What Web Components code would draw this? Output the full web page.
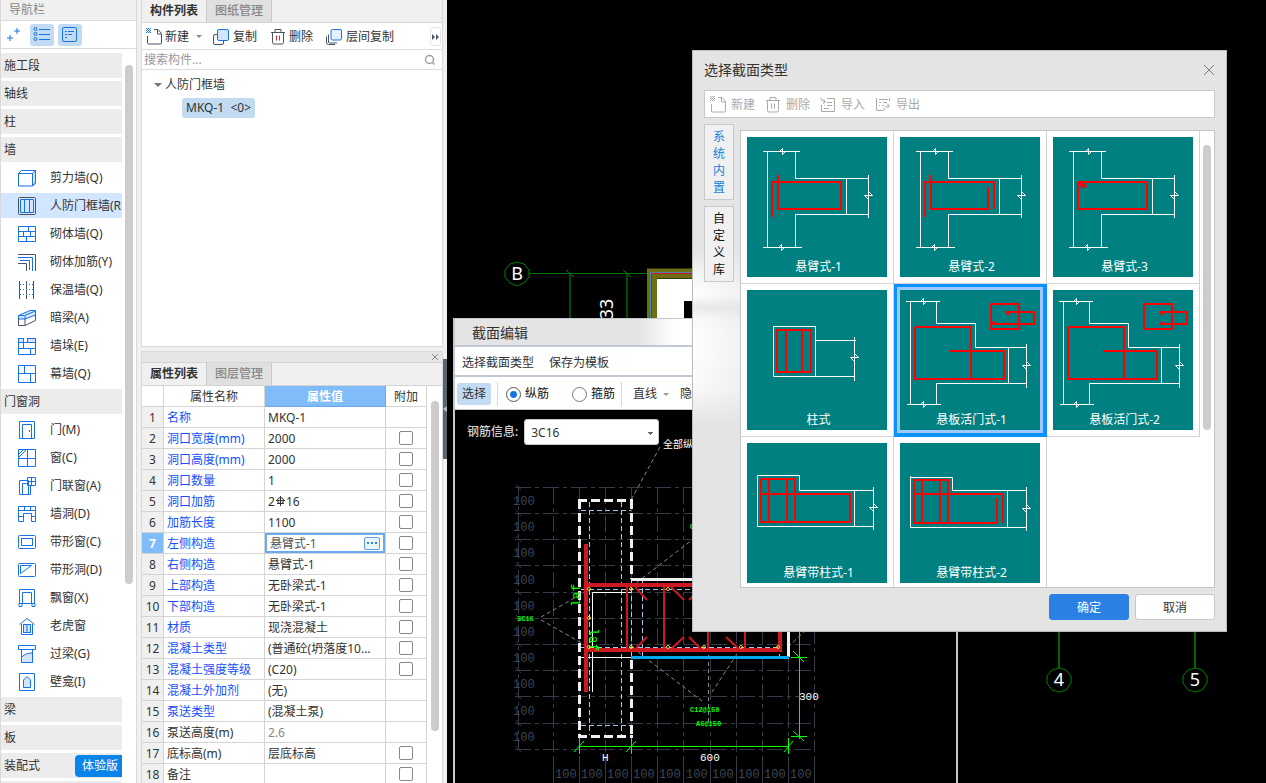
<!DOCTYPE html>
<html lang="zh-CN">
<head>
<meta charset="utf-8">
<title>截面编辑</title>
<style>
  html, body {
    margin: 0;
    height: 100%;
  }

  body {
    font-family: "Noto Sans", "Noto Sans CJK SC", sans-serif;
    font-size: 12px;
    line-height: 18px;
    color: #333;
    background: #f0f0f0;
    overflow: hidden;
  }
</style>
</head>
<body>
<cad-app></cad-app>

<script>
(function() {
  const base = `
    *, *::before { box-sizing: border-box; }
    button, select, input { font: inherit; color: inherit; margin: 0; }
    button { border: none; background: none; padding: 0; line-height: 18px; white-space: nowrap; }
    svg { display: block; flex: none; }
  `;

  // html is a string, or a function of the host element
  const define = (name, html) => {
    customElements.define(name, class extends HTMLElement {
      constructor() {
        super();
        const template = document.createElement('template');
        template.innerHTML = typeof html === 'function' ? html(this) : html;
        this.attachShadow({ mode: 'open' });
        this.shadowRoot.appendChild(template.content.cloneNode(true));
      }
    });
  };

  // ---- icons -------------------------------------------------------------

  const blue = '#1673e6';
  const dark = '#4a5266';
  const pale = '#d3e4fb';

  const icons = {
    plus: `<path d="M12 2v6M9 5h6M5 9v6M2 12h6" stroke="${blue}"/>`,
    list: `<g stroke="${blue}"><circle cx="2.5" cy="3" r="1.5"/><circle cx="2.5" cy="8" r="1.5"/><circle cx="2.5" cy="13" r="1.5"/><path d="M6 3.5h11M6 8.5h11M6 13.5h11"/></g>`,
    card: `<g stroke="${blue}"><rect x="1.5" y="1.5" width="14" height="14" rx="1.5"/><path d="M4 5.5h2M7 5.5h6M4 8.5h2M7 8.5h4M4 11.5h2"/></g>`,
    create: `<path d="M1.500 8v7a1 1 0 0 0 1 1h12a1 1 0 0 0 1-1V5.500L12 1.500H8M11.500 1.500V6h4" stroke="var(--ink, ${dark})"/><path d="M0 .5h5M1 1.500h4M0 2.500h5M1 3.500h4M0 4.500h5" stroke="var(--mark, ${blue})" stroke-dasharray="1 1"/>`,
    copy: `<rect x=".5" y="6.500" width="10" height="10" rx="1.500" stroke="${dark}"/><rect x="4.500" y="1.500" width="11" height="11" rx="1.500" fill="${pale}" stroke="${blue}"/>`,
    copies: `<path d="M2.500 6.500V14a1 1 0 0 0 1 1H11M.5 8.500V15a2 2 0 0 0 2 1.500H9" stroke="${dark}"/><rect x="5" y="1.500" width="10.500" height="10.500" rx="1.500" fill="#e6f0ff" stroke="${blue}"/>`,
    trash: `<path d="M1 4.500h14M5 4V1.500h6V4M2.500 5v9.500a1.500 1.500 0 0 0 1.500 1.500h8a1.500 1.500 0 0 0 1.500-1.500V5" stroke="var(--ink, ${dark})"/><path d="M6.500 7.500v5M9.500 7.500v5" stroke="var(--mark, #d9222a)"/>`,
    import: `<path d="M7 2.500h7.500v13h-13V9M1 1.500c0 3 1 4 4 4M3 3l2.500 2.500L3 8M7 6.500h5M4 9.500h1M7 9.500h5M4 12.500h5" stroke="var(--ink)"/>`,
    export: `<path d="M1.500 2v12.500H8M4 3.500h9M4 6.500h2M8 6.500h4M4 9.500h1M7 9.500h2M14.500 2v3M9 15c0-4 1-5 5-5M12 7.500l2.500 2.500L12 12.500" stroke="var(--ink)"/>`,
    search: `<circle cx="5.500" cy="5.500" r="4" stroke="#a0a0a0" stroke-width="1.500"/><path d="M8.500 8.500L10.500 10.500" stroke="#a0a0a0" stroke-width="1.500"/>`,
    close: `<path d="M1 1l10 10M11 1l-10 10" stroke="#808080"/>`
  };

  const navIcons = {
    shear: `<path d="M14.500 4.500L17.500 1.500V14l-3 3z" fill="${pale}"/><path d="M.5 4.500h14v12.500H.5zM.5 4.500L3.500 1.500h14V14l-3 3M14.500 4.500l3-3"/>`,
    frame: `<rect x=".5" y=".5" width="17" height="17" rx="1" stroke="${dark}"/><path d="M2.500 2.500h13v13h-13zM6.500 2.500v13M11.500 2.500v13"/>`,
    brick: `<path d="M.5 1.500h17v15H.5zM.5 6.500h17M.5 11.500h17M10.500 1.500v5M5.500 6.500v5M12.500 6.500v5M8.500 11.500v5"/>`,
    rebar: `<path d="M0 1.500h17.500V18" stroke="${dark}"/><path d="M0 4.500h14.500V18M2 7.500h9.500V17"/><path d="M0 10.500h8.500V18" stroke="${dark}"/>`,
    insul: `<path d="M1.500 0v18M8.500 0v18M15.500 0v18" stroke="${dark}"/><path d="M2 3.500h14M2 8.500h14M2 13.500h14" stroke-dasharray="1 2"/>`,
    hidden: `<path d="M.5 6.500L12 1.500h5.500V6L7 10H.5z" fill="${pale}"/><path d="M7 7v3M.5 6.500h6L17.500 2"/><path d="M.5 10v6.500H7V10M7 16.500l10.500-5V6" stroke="${dark}"/>`,
    pier: `<rect x=".5" y="1.500" width="5" height="4" fill="${pale}"/><rect x="9.500" y="1.500" width="8" height="4" fill="${pale}"/><path d="M.5 5.500v12h17v-12M.5 5.500h17M5.500 5.500v6M.5 11.500h17M12.500 11.500v6"/>`,
    curtain: `<path d="M.5.5h17v17H.5zM6.500.5v8M.5 8.500h17M12.500 8.500v9"/>`,
    door: `<path d="M1.500.5h15v17h-15zM4.500 17.500V3.500h9v14M11.500 9v2"/>`,
    window: `<path d="M.5.5h17v17H.5zM9.500.5v17M.5 9.500h17M1 8l7-7M1 5l4-4"/>`,
    doorwin: `<path d="M1.500 3.500h9v14h-9zM4.500 17.500V6.500h4M9.500.5h8v8h-8zM13.500.5v8M9.500 4.500h8M12.500 9v8.500h-3"/>`,
    hole: `<path d="M.5 1.500h17v15h-4V8.500h-8v8h-5zM.5 5.500h17M6.500 1.500v4M12.500 1.500v4M.5 11.500h5M13.500 11.500h4"/>`,
    strip: `<rect x=".5" y="2.500" width="17" height="13" rx="1"/><rect x="3.500" y="5.500" width="11" height="7"/>`,
    striphole: `<rect x=".5" y="2.500" width="17" height="13" rx="1"/><path d="M2.500 4.500h11L2.500 12.500z"/>`,
    bay: `<path d="M1.500 14V.5h15V14M4.500 14V3.500h9V14M1 14.500h3v3H1zM14 14.500h3v3h-3zM4 14.500h10"/>`,
    dormer: `<rect x="5.500" y="7.500" width="7" height="8" fill="${pale}"/><path d="M1.500 7.500L9 1.500l7.500 6M3.500 7v10.500h11V7M9 8v8"/>`,
    lintel: `<path d="M3.500 12c4-3 6-4 11-4v9.500h-11z" fill="${pale}"/><path d="M.5.5h17v4H.5zM3.500 5v12.500h11V5"/>`,
    niche: `<path d="M1.500.5h15v17h-15z"/><path d="M5.500 14.500V7L9 3.500 12.500 7v7.500z" fill="${pale}"/>`
  };

  const icon = (name, w = 18, h = 18) =>
    `<svg width="${w}" height="${h}" fill="none" aria-hidden="true">${icons[name]}</svg>`;
  const navIcon = name =>
    `<svg width="18" height="18" fill="none" stroke="${blue}" aria-hidden="true">${navIcons[name]}</svg>`;

  // ---- navigation --------------------------------------------------------

  const nav = [
    ['施工段'], ['轴线'], ['柱'], ['墙'],
    ['剪力墙(Q)', 'shear'], ['人防门框墙(R', 'frame'], ['砌体墙(Q)', 'brick'],
    ['砌体加筋(Y)', 'rebar'], ['保温墙(Q)', 'insul'], ['暗梁(A)', 'hidden'],
    ['墙垛(E)', 'pier'], ['幕墙(Q)', 'curtain'],
    ['门窗洞'],
    ['门(M)', 'door'], ['窗(C)', 'window'], ['门联窗(A)', 'doorwin'], ['墙洞(D)', 'hole'],
    ['带形窗(C)', 'strip'], ['带形洞(D)', 'striphole'], ['飘窗(X)', 'bay'],
    ['老虎窗', 'dormer'], ['过梁(G)', 'lintel'], ['壁龛(I)', 'niche'],
    ['梁'], ['板'], ['装配式']
  ];

  define('side-nav', `
    <style>
    ${base}
    :host {
        display: flex;
        flex-direction: column;
        width: 137px;
        height: 100%;
        background: white;
        border: solid #d9d9d9;
        border-width: 0 1px;
        overflow: hidden;
    }

    header {
        background: #f0f0f0;
        color: #888;
        padding: 1px 8px;
        border-bottom: 1px solid #dcdcdc;
    }

    .tools {
        display: flex;
        gap: 4px;
        padding: 3px 1px 2px;
        border-bottom: 1px solid #d9d9d9;
    }

    .tools button {
        width: 24px;
        height: 22px;
        display: grid;
        place-items: center;
        border-radius: 3px;
    }

    .tools .on { background: #c2dbf2; }

    .body {
        flex: 1;
        min-height: 0;
        display: flex;
        justify-content: space-between;
    }

    .list {
        width: 121px;
        padding-top: 4px;
        display: flex;
        flex-direction: column;
        gap: 3px;
    }

    .list button {
        height: 25px;
        flex: none;
        display: flex;
        align-items: center;
        gap: 14px;
        padding-left: 17px;
        overflow: hidden;
    }

    .list .group {
        background: #ececec;
        padding-left: 3px;
        justify-content: space-between;
    }

    .list .active { background: #d3e6ff; }

    .trial {
        background: #0a84e8;
        color: white;
        padding: 2px 4px 2px 7px;
        border-radius: 4px 0 0 4px;
    }

    .bar {
        width: 8px;
        height: 519px;
        margin: 16px 3px 0;
        border-radius: 4px;
        background: #ccc;
    }
    </style>
    <header>导航栏</header>
    <div class="tools">
      <button title="添加">${icon('plus')}</button>
      <button class="on" title="列表">${icon('list')}</button>
      <button class="on" title="卡片">${icon('card')}</button>
    </div>
    <div class="body">
      <div class="list">
        ${nav.map(([text, ic], i) => ic
          ? `<button${i === 5 ? ' class="active"' : ''}>${navIcon(ic)}<span>${text}</span></button>`
          : `<button class="group"><span>${text}</span>${text === '装配式' ? '<span class="trial">体验版</span>' : ''}</button>`
        ).join('')}
        <button class="group"></button>
      </div>
      <div class="bar"></div>
    </div>
  `);

  // ---- tab strip ---------------------------------------------------------

  define('tab-strip', host => `
    <style>
    ${base}
    :host {
        display: flex;
        background: #f0f0f0;
        border-bottom: 1px solid #d4d4d4;
    }

    button {
        height: 22px;
        padding: 0 8px;
        border-right: 1px solid #c8c8c8;
        color: #888;
        font-weight: 500;
        background: #e0e0e0;
    }

    button:first-of-type {
        color: #333;
        font-weight: bold;
        background: #f0f0f0;
    }
    </style>
    ${(host.getAttribute('tabs') || '').split(',').map(t => `<button role="tab">${t}</button>`).join('')}
  `);

  // ---- component list ----------------------------------------------------

  define('component-list', `
    <style>
    ${base}
    :host {
        display: flex;
        flex-direction: column;
        background: white;
        border: 1px solid #d9d9d9;
        border-top: none;
    }

    .tools {
        display: flex;
        align-items: center;
        height: 27px;
        padding: 1px 1px 0 4px;
        border-bottom: 1px solid #dcdcdc;
    }

    .tools button {
        display: flex;
        align-items: center;
        gap: 2px;
        margin-right: 13px;
    }

    .tools .drop { margin-right: 11px; }
    .tools .drop::after {
        content: "";
        border: 3px solid transparent;
        border-top-color: #888;
        border-bottom: none;
        margin-left: 5px;
    }

    .tools .more {
        margin: 0 0 0 auto;
        width: 11px;
        height: 19px;
        border: 1px solid #e4e4e4;
        border-radius: 3px;
    }

    .find {
        display: flex;
        align-items: center;
        height: 20px;
        padding-right: 6px;
        border-bottom: 1px solid #dcdcdc;
    }

    input {
        flex: 1;
        min-width: 0;
        border: none;
        outline: none;
        padding: 0 2px;
        height: 18px;
        background: none;
    }

    input::placeholder { color: #999; }

    .tree { padding: 6px 12px; }

    .node {
        display: flex;
        align-items: center;
        gap: 3px;
    }

    .node::before {
        content: "";
        border: 4px solid transparent;
        border-top-color: #777;
        border-bottom: none;
    }

    .leaf {
        margin: 4px 0 0 28px;
        padding: 1px 4px;
        border-radius: 3px;
        background: #c2dbf2;
        white-space: pre;
    }
    </style>
    <tab-strip tabs="构件列表,图纸管理"></tab-strip>
    <div class="tools">
      <button class="drop">${icon('create', 17)}新建</button>
      <button>${icon('copy', 18)}复制</button>
      <button>${icon('trash', 17)}删除</button>
      <button>${icon('copies', 18)}层间复制</button>
      <button class="more" title="更多"><svg width="9" height="8"><path d="M1 1l3 3-3 3zM5 1l3 3-3 3z" fill="${dark}"/></svg></button>
    </div>
    <div class="find">
      <input type="text" placeholder="搜索构件..." aria-label="搜索构件">
      ${icon('search', 12, 12)}
    </div>
    <div class="tree">
      <div class="node">人防门框墙</div>
      <button class="leaf">MKQ-1  &lt;0&gt;</button>
    </div>
  `);

  // ---- property table ----------------------------------------------------

  const rebarSign = '<svg width="10" height="10" fill="none" stroke="#333"><circle cx="5.5" cy="4.500" r="3"/><path d="M5.500 0v10M1 4.500h9M2 7.500h7"/></svg>';

  // name, value, has checkbox, plain (not blue) name
  const props = [
    ['名称', 'MKQ-1', 0], ['洞口宽度(mm)', '2000', 1], ['洞口高度(mm)', '2000', 1],
    ['洞口数量', '1', 1], ['洞口加筋', `2${rebarSign}16`, 1],
    ['加筋长度', '1100', 1], ['左侧构造', '悬臂式-1', 1], ['右侧构造', '悬臂式-1', 1],
    ['上部构造', '无卧梁式-1', 1], ['下部构造', '无卧梁式-1', 1], ['材质', '现浇混凝土', 1],
    ['混凝土类型', '(普通砼(坍落度10...', 1], ['混凝土强度等级', '(C20)', 1],
    ['混凝土外加剂', '(无)', 0], ['泵送类型', '(混凝土泵)', 0],
    ['泵送高度(m)', '<span class="dim">2.6</span>', 0, 1], ['底标高(m)', '层底标高', 1, 1], ['备注', '', 1, 1]
  ];

  define('property-list', `
    <style>
    ${base}
    :host {
        display: flex;
        flex-direction: column;
        background: white;
        border: 1px solid #d9d9d9;
        border-bottom: none;
        overflow: hidden;
    }

    .head {
        display: flex;
        justify-content: flex-end;
        align-items: center;
        height: 11px;
        padding-right: 3px;
        background: #e6e6e6;
        border-bottom: 1px solid #d4d4d4;
    }

    .body {
        flex: 1;
        min-height: 0;
        display: flex;
        justify-content: space-between;
        overflow: hidden;
    }

    table {
        width: 285px;
        height: max-content;
        table-layout: fixed;
        border-collapse: separate;
        border-spacing: 0;
    }

    th, td {
        height: 21px;
        padding: 2px 0 0 3px;
        border: solid #d4d4d4;
        border-width: 0 1px 1px 0;
        font-weight: normal;
        text-align: left;
        white-space: nowrap;
        line-height: 18px;
    }

    thead th { text-align: center; padding: 2px 0 0; }
    thead .on { background: #80bbfa; color: white; font-weight: bold; border-color: #6aa8ea; }
    tbody th { background: #f0f0f0; text-align: center; padding: 2px 0 0; }
    td { color: #1450ff; }
    td + td { color: #333; }
    .plain td { color: #333; }
    td.tick { padding: 0; text-align: center; }
    .dim { color: #888; }
    td svg { display: inline-block; margin: 0 1px 0 0; vertical-align: 0; }

    .active th { background: #80bbfa; color: white; font-weight: bold; }
    .active td:nth-child(3) { padding: 0; }

    .edit {
        display: flex;
        align-items: center;
        height: 20px;
        padding: 0 3px;
        border: 2px solid #6aaaf0;
    }

    .edit input {
        flex: 1;
        min-width: 0;
        height: 16px;
        padding: 1px 0 0;
        border: none;
        outline: none;
        color: #555;
    }

    .edit button {
        width: 16px;
        height: 13px;
        display: grid;
        place-items: center;
        border: 1px solid #5a9fe8;
        border-radius: 2px;
        background: #eaf4ff;
    }

    input[type=checkbox] {
        appearance: none;
        display: block;
        width: 14px;
        height: 14px;
        margin: 0 auto;
        border: 1px solid #888;
        border-radius: 2px;
        background: white;
    }

    .bar {
        width: 8px;
        height: 330px;
        margin: 15px 3px 0;
        border-radius: 4px;
        background: #ccc;
    }
    </style>
    <div class="head"><button title="关闭"><svg width="8" height="8"><path d="M1 1l6 6M7 1L1 7" stroke="#888"/></svg></button></div>
    <tab-strip tabs="属性列表,图层管理"></tab-strip>
    <div class="body">
      <table>
        <colgroup><col style="width:22px"><col style="width:101px"><col style="width:121px"><col></colgroup>
        <thead><tr><th></th><th>属性名称</th><th class="on">属性值</th><th>附加</th></tr></thead>
        <tbody>
          ${props.map(([name, value, tick, plain], i) => `
            <tr class="${i === 6 ? 'active' : ''}${plain ? 'plain' : ''}">
              <th>${i + 1}</th>
              <td>${name}</td>
              <td>${i === 6 ? `<div class="edit"><input type="text" value="${value}" aria-label="${name}"><button title="更多"><svg width="10" height="2"><path d="M0 0h2v2H0zM4 0h2v2H4zM8 0h2v2H8z" fill="#2f80e0"/></svg></button></div>` : value}</td>
              <td class="tick">${tick ? `<input type="checkbox" aria-label="${name}附加">` : ''}</td>
            </tr>`).join('')}
        </tbody>
      </table>
      <div class="bar"></div>
    </div>
  `);

  // ---- plan view behind the windows --------------------------------------

  const axis = (x, label) => `
    <path d="M${x} 560V668" stroke="#006400" stroke-width="2"/>
    <path d="M${x} 668l7 2 5 6v7l-5 7-7 2-7-2-5-7v-7l5-6z" stroke="#008000"/>
    <text x="${x}" y="686">${label}</text>`;

  define('plan-view', `
    <style>
    :host { display: block; overflow: hidden; }
    svg { display: block; width: 100%; height: 100%; }
    text { fill: white; font-size: 18px; text-anchor: middle; stroke: none; }
    </style>
    <svg fill="none">
      <g transform="translate(-447 0)">
        <path d="M570 273V330M627 273V330" stroke="#004b00" stroke-width="2"/>
        <path d="M529 273.500H650" stroke="#007000"/>
        <path d="M566 270l8 7M623 270l8 7" stroke="#008000"/>
        <path d="M517 262l7 2 5 6v7l-5 6-7 3-7-3-5-6v-7l5-6z" stroke="#008000"/>
        <text x="517" y="280">B</text>
        <text transform="translate(613 309) rotate(-90)">33</text>
        <path d="M647 268.500h60v10h-50v50h-10z" fill="#6e6e14"/>
        <path d="M657 279h50v50h-50z" fill="white"/>
        <path d="M684 301h20v20h-20z" fill="black"/>
        <path d="M650.500 330V272.500H707" stroke="#4a86a0"/>
        <path d="M651.500 330V273.500H707" stroke="#d01030"/>
        ${axis(1059, '4')}
        ${axis(1195, '5')}
      </g>
    </svg>
  `);

  // ---- section drawing ---------------------------------------------------

  const rows = [487, 513, 539, 565, 592, 618, 644, 670, 696, 723, 749];
  const cols = [553, 579, 605, 631, 657, 683, 710, 736, 762, 788, 814];
  const rings = [[589, 589], [631, 589], [668, 589], [589, 618], [589, 647], [631, 647], [668, 647], [704, 647], [741, 647], [778, 647]];

  define('section-drawing', `
    <style>
    :host { display: block; overflow: hidden; }
    svg { display: block; width: 100%; height: 100%; }
    text { font-family: "Liberation Mono", "Noto Sans CJK SC", monospace; font-size: 11px; fill: white; stroke: none; }
    .scale text { fill: #3d4655; font-size: 12px; }
    .tag text { fill: #0f0; font-size: 7px; font-weight: bold; }
    .tag .mark { font-size: 13px; font-weight: normal; }
    </style>
    <svg fill="none">
      <g transform="translate(-455 -410)">
        <g stroke="#333b47" stroke-dasharray="16 4 4 4" shape-rendering="crispEdges">
          ${rows.map(y => `<path d="M515 ${y}.5H815"/>`).join('')}
          ${cols.map(x => `<path d="M${x}.5 488V752"/>`).join('')}
          <path d="M518.500 486V750"/>
        </g>
        <g stroke="#333b47">
          ${rows.map(y => `<path d="M516 ${y - 3}l5 6"/>`).join('')}
          ${cols.map(x => `<path d="M${x}.5 756v27"/>`).join('')}
        </g>
        <g class="scale">
          ${rows.slice(1).map(y => `<text x="513" y="${y - 8}">100</text>`).join('')}
          ${cols.slice(1).map(x => `<text x="${x - 24}" y="778">100</text>`).join('')}
        </g>
        <g stroke="#8a8a8a" stroke-dasharray="4 3">
          <path d="M660 447L631 500M587 591L541 617M541 620L587 646M631 587L692 540M638 652L702 701M708.500 655V722M741 648L712 692M788 647L806 630"/>
        </g>
        <g stroke="#a8c8f0" stroke-dasharray="5 3" shape-rendering="crispEdges">
          <path d="M589.500 502V735M621.500 502V735M581 510.500H631M581 725.500H631M581 589.500H780M581 647.500H780M631.500 580V657M642.500 580V657M779.500 590V657"/>
        </g>
        <path d="M579.500 500V738M631.500 500V579M631.500 660V738" stroke="#f0f0f0" stroke-width="3" stroke-dasharray="9 4"/>
        <path d="M578 500.500H633M578 736.500H633" stroke="#f0f0f0" stroke-width="3" stroke-dasharray="9 4"/>
        <path d="M631 579.500H788.500V657" stroke="#f0f0f0" stroke-width="3"/>
        <path d="M631 657.500H789" stroke="#00a8f0" stroke-width="3"/>
        <path d="M579 657.500H631M631 592.500H592.500V692" stroke="white"/>
        <g stroke="#cc1820">
          <path d="M586 544V692M586 585H780V650H586" stroke-width="4"/>
          <path d="M627 586V650M664 586V650M708 586V650M745 586V650" stroke-width="2"/>
          <path d="M635 587l12 13M671 587l13 13M702 587l-13 13M636 648l11-11M672 648l12-11M700 648l-11-11M738 648l-12-11" stroke-width="2"/>
        </g>
        <g stroke="#e8d020">${rings.map(([x, y]) => `<circle cx="${x}" cy="${y}" r="1.500"/>`).join('')}</g>
        <g stroke="#0f0">
          <path d="M579 746.500H789M579.500 738v16M631.500 738v16M788.500 738v16M574 752l10-11M626 752l10-11M784 752l9-11"/>
          <path d="M799.500 620V739M791 657.500h16M791 736.500h16M793 651l11 11M793 731l11 10"/>
        </g>
        <g class="tag">
          <text x="517" y="621">3C16</text>
          <text x="690" y="712">C12@150</text>
          <text x="696" y="726">A6@150</text>
          <text x="690" y="529">C</text>
          <text class="mark" transform="translate(580 607) rotate(-90)">laf</text>
          <text class="mark" transform="translate(590 628) rotate(90)">laf</text>
        </g>
        <text x="602" y="761">H</text>
        <text x="700" y="761">600</text>
        <text x="799" y="700">300</text>
        <text x="663" y="448" style="font-size:10px">全部纵</text>
      </g>
    </svg>
  `);

  // ---- section editor window ---------------------------------------------

  define('section-editor', `
    <style>
    ${base}
    :host {
        display: flex;
        flex-direction: column;
        border: solid #c3c7ce;
        border-width: 1px 2px 0;
        background: black;
    }

    header {
        height: 28px;
        padding: 4px 17px;
        font-size: 14px;
        line-height: 20px;
        border-bottom: 2px solid #c3c9d0;
        background: linear-gradient(90deg, #e4e4e4 36%, #e8e8e6 38%, #fff 44%);
    }

    .menu, .tools {
        display: flex;
        align-items: center;
        background: white;
    }

    .menu { gap: 15px; height: 30px; padding: 3px 7px 0; border-bottom: 2px solid #c3c9d0; }
    .tools { height: 33px; padding: 2px 2px 0; border-bottom: 1px solid #c3c9d0; }

    .select {
        padding: 2px 5px;
        border-radius: 3px;
        background: #c2dbf2;
    }

    .rule { width: 1px; height: 24px; margin: 0 8px 0 6px; background: #d9d9d9; }
    label { display: flex; align-items: center; gap: 4px; color: #111; }
    label + label { margin-left: 23px; }

    input {
        appearance: none;
        width: 15px;
        height: 15px;
        border: 1px solid #777;
        border-radius: 50%;
        background: white;
    }

    input:checked {
        border-color: #555;
        background: radial-gradient(circle, #1673e6 3px, white 4px);
    }

    .drop { display: flex; align-items: center; gap: 6px; margin: 0 11px 0 3px; }
    .drop::after {
        content: "";
        border: 3px solid transparent;
        border-top-color: #999;
        border-bottom: none;
    }

    .stage {
        position: relative;
        flex: 1;
        min-height: 0;
    }

    section-drawing { height: 100%; }

    .field {
        position: absolute;
        left: 12px;
        top: 9px;
        color: #eee;
        gap: 6px;
    }

    select {
        appearance: none;
        width: 135px;
        height: 26px;
        padding: 1px 6px 0;
        border: 1px solid #c8ccd2;
        border-radius: 3px;
        color: #333;
        background: linear-gradient(#666, #666) calc(100% - 5px) 50% / 5px 1px no-repeat,
            linear-gradient(#666, #666) calc(100% - 6px) calc(50% + 1px) / 3px 1px no-repeat,
            linear-gradient(#666, #666) calc(100% - 7px) calc(50% + 2px) / 1px 1px no-repeat, white;
    }
    </style>
    <header>截面编辑</header>
    <div class="menu"><button>选择截面类型</button><button>保存为模板</button></div>
    <div class="tools">
      <button class="select">选择</button>
      <span class="rule"></span>
      <label><input type="radio" name="bar" checked>纵筋</label>
      <label><input type="radio" name="bar">箍筋</label>
      <span class="rule"></span>
      <button class="drop">直线</button>
      <button>隐</button>
    </div>
    <div class="stage">
      <section-drawing></section-drawing>
      <label class="field">钢筋信息:<select><option>3C16</option></select></label>
    </div>
  `);

  // ---- section type cards ------------------------------------------------

  // break marks across a vertical and across a horizontal edge
  const brkV = (x, y) => `M${x} ${y - 4}l4 4h-8l4 4`;
  const brkH = (x, y) => `M${x - 3} ${y}l3 -3v6l3 -3`;

  const tee = 'M20.500 14.500V110.500M16 14.500H53M16 110.500H55M48.500 14.500V41.500H121.500M48.500 110.500V77.500H121.500M99.500 41.500V77.500M121.500 38V81' +
    brkH(35.5, 14.5) + brkH(34.5, 110.5) + brkV(121.5, 58.5);
  const step = 'M10.500 11.500V114.500M6 11.500H40M7 114.500H41M36.500 11.500V33.500H75.500V57.500H126.500M36.500 114.500V93.500H126.500M108.500 57.500V93.500M126.500 54V98' +
    brkH(23.5, 11.5) + brkH(23.5, 114.5) + brkV(126.5, 75.5);
  const stepBars = 'M15 37H71V89M15 37V89H104V61H50';

  const cards = [
    ['悬臂式-1', tee, 'M25 80V45H94V72H31V38'],
    ['悬臂式-2', tee, 'M25 80V45H94V72M31 38V72H88V50'],
    ['悬臂式-3', tee, 'M25 45H94V72H25zM26 46l5 5M29 46l5 4'],
    ['柱式', 'M26.500 36.500H68.500V86.500H26.500zM68.500 50.500H109M68.500 86.500H107.500M107.500 47V91' + brkV(107.5, 67.5), 'M30 40H64V82H30zM39 40V82M55 40V82'],
    ['悬板活门式-1', step, stepBars + 'M91 14H119V39H91zM106 22H134V34H91M106 22l3 3M92 33l4 -1'],
    ['悬板活门式-2', step, stepBars + 'M91 14H119V39H91zM107 22H134V34H107M107 22l3 3M107 34l3 -2'],
    ['悬臂带柱式-1', 'M10.500 32.500H52.500V47.500H126.500M10.500 32.500V83.500H126.500M107.500 47.500V83.500M126.500 44V87' + brkV(126.5, 64.5), 'M14 36H48V79M14 36V79H103V51H14M22 36V79M40 36V79'],
    ['悬臂带柱式-2', 'M10.500 34.500H52.500V47.500H126.500M10.500 33V84.500H126.500M107.500 47.500V84.500M126.500 44V88' + brkV(126.5, 65.5), 'M14 37H48V80M14 37V80H97V55M14 51H103V80M22 37V80M40 37V80']
  ];

  define('section-card', host => {
    const [name, edge, bars] = cards[host.getAttribute('index')];
    return `
    <style>
    ${base}
    :host {
        display: block;
        height: 153px;
        border: solid #d4d4d4;
        border-width: 0 1px 1px 0;
    }

    button {
        position: relative;
        display: block;
        width: 100%;
        height: 100%;
        border: 6px solid white;
        background: #008080;
        color: white;
    }

    :host([selected]) { border-color: #0a93ff; }

    :host([selected]) button {
        border-color: #9fc8ff;
        outline: 3px solid #0a93ff;
        outline-offset: -3px;
    }

    span {
        position: absolute;
        left: 0;
        right: 0;
        bottom: 1px;
        padding-left: 3px;
    }
    </style>
    <button>
      <svg viewBox="0 0 140 140" width="100%" fill="none">
        <path d="${edge}" stroke="white"/>
        <path d="${bars}" stroke="red" stroke-width="2" stroke-linejoin="round"/>
      </svg>
      <span>${name}</span>
    </button>`;
  });

  // ---- section type dialog -----------------------------------------------

  define('section-dialog', `
    <style>
    ${base}
    :host {
        display: flex;
        flex-direction: column;
        padding: 0 11px 11px;
        border: 1px solid #bcbcbc;
        background:
            linear-gradient(90deg, transparent, #e4e4e4 100px),
            linear-gradient(#e4e4e4 200px, #f6f6f4 224px, white 244px, #e9e9e9 256px, #fafafa 268px, white 290px, #fafafa 338px, #e4e4e4 372px);
    }

    header {
        display: flex;
        justify-content: space-between;
        align-items: center;
        height: 39px;
        padding-bottom: 2px;
        font-size: 14px;
    }

    .tools {
        display: flex;
        align-items: center;
        gap: 10px;
        height: 28px;
        padding: 2px 5px 0;
        border: 1px solid #c5c9d0;
        background: white;
        color: #aaa;
        --ink: #aaa;
        --mark: #aaa;
    }

    .tools button { display: flex; align-items: center; gap: 4px; }

    .main {
        flex: 1;
        min-height: 0;
        display: flex;
        gap: 6px;
        margin: 6px 0;
    }

    .side { width: 30px; display: flex; flex-direction: column; gap: 6px; }

    .side button {
        height: 76px;
        border: 1px solid #c8c8c8;
        background: #f0f0f0;
        padding: 0 8px;
        line-height: 17px;
        white-space: normal;
        color: #111;
    }

    .side .on { color: #1283e0; }

    .list {
        flex: 1;
        display: flex;
        justify-content: space-between;
        margin-top: 6px;
        padding-right: 3px;
        border: 1px solid #c5c5c5;
        background: white;
        overflow: hidden;
    }

    .grid {
        flex: 1;
        display: grid;
        grid-template-columns: repeat(auto-fill, 153px);
        grid-auto-rows: 153px;
    }

    .bar {
        width: 8px;
        height: 285px;
        margin-top: 14px;
        border-radius: 4px;
        background: #ccc;
    }

    footer { display: flex; justify-content: flex-end; gap: 6px; }

    footer button {
        width: 80px;
        height: 26px;
        padding-top: 1px;
        border: 1px solid #c8c8c8;
        border-radius: 3px;
        background: white;
    }

    footer .ok { background: #2b80e4; border-color: #2b80e4; color: white; }
    </style>
    <header>选择截面类型<button title="关闭">${icon('close', 12, 12)}</button></header>
    <div class="tools">
      <button>${icon('create', 17)}新建</button>
      <button>${icon('trash', 17)}删除</button>
      <button>${icon('import', 17)}导入</button>
      <button>${icon('export', 17)}导出</button>
    </div>
    <div class="main">
      <div class="side"><button class="on">系统内置</button><button>自定义库</button></div>
      <div class="list">
        <div class="grid">
          ${cards.map((c, i) => `<section-card index="${i}"${i === 4 ? ' selected' : ''}></section-card>`).join('')}
        </div>
        <div class="bar"></div>
      </div>
    </div>
    <footer><button class="ok">确定</button><button>取消</button></footer>
  `);

  // ---- page --------------------------------------------------------------

  define('cad-app', `
    <style>
    ${base}
    :host {
        display: flex;
        gap: 4px;
        height: 100vh;
    }

    .panels {
        display: flex;
        flex-direction: column;
        gap: 4px;
        width: 302px;
    }

    component-list { height: 347px; flex: none; }
    property-list { flex: 1; min-height: 0; }

    main {
        position: relative;
        flex: 1;
        background: black;
    }

    plan-view { height: 100%; }

    /* floating windows over the plan */
    section-editor {
        position: absolute;
        left: 6px;
        top: 318px;
        bottom: 0;
        width: 505px;
    }

    section-dialog {
        position: absolute;
        left: 245px;
        top: 50px;
        bottom: 151px;
        width: 535px;
    }

    .fold {
        position: absolute;
        left: -4px;
        top: 359px;
        width: 4px;
        height: 100px;
        display: grid;
        place-items: center;
        background: #5a6370;
    }
    </style>
    <side-nav></side-nav>
    <div class="panels">
      <component-list></component-list>
      <property-list></property-list>
    </div>
    <main>
      <plan-view></plan-view>
      <button class="fold" title="收起"><svg width="4" height="6"><path d="M4 0v6L0 3z" fill="#b8bec8"/></svg></button>
      <section-editor></section-editor>
      <section-dialog></section-dialog>
    </main>
  `);
})();
</script>
</body>
</html>
